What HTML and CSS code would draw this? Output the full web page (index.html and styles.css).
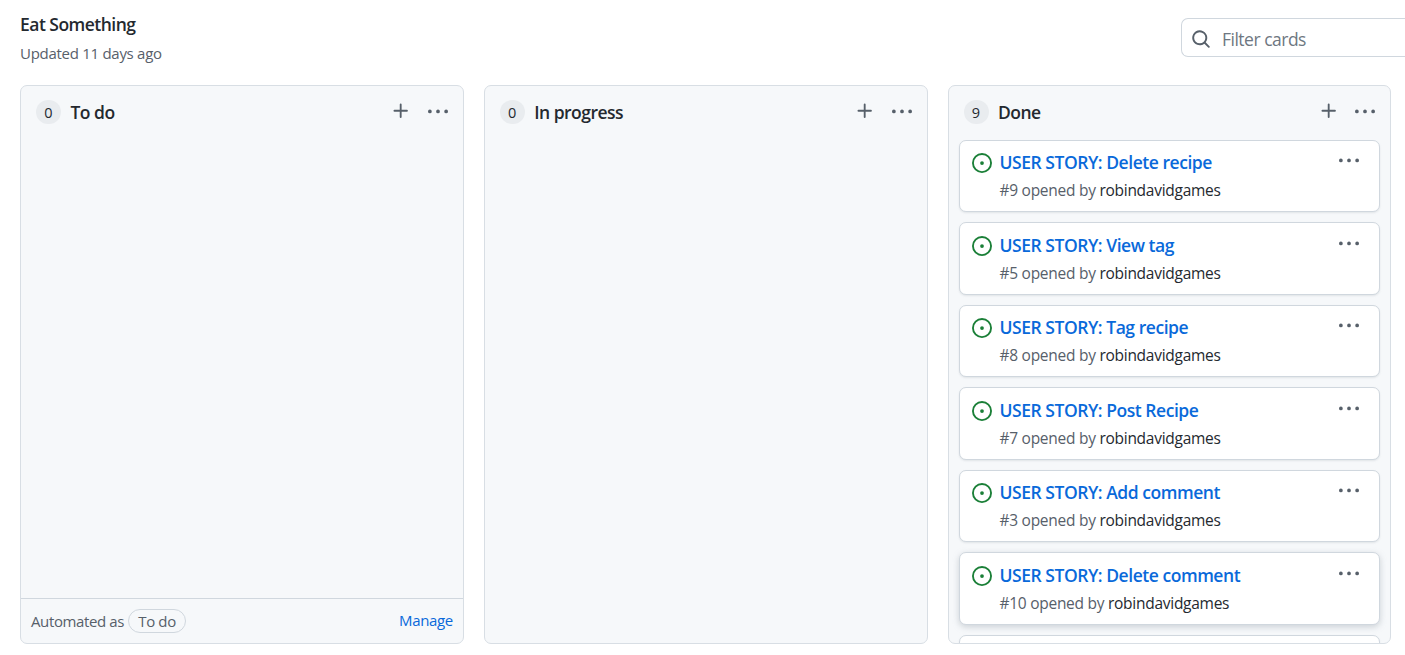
FILE: index.html
```html
<!DOCTYPE html>
<html lang="en">
<head>
<meta charset="utf-8">
<title>Eat Something</title>
<link rel="stylesheet" href="styles.css">
</head>
<body>
<svg class="defs" aria-hidden="true">
  <symbol id="plus" viewBox="0 0 16 16"><path d="M7.75 2a.75.75 0 01.75.75V7h4.25a.75.75 0 110 1.5H8.5v4.25a.75.75 0 11-1.5 0V8.5H2.75a.75.75 0 010-1.5H7V2.75A.75.75 0 017.75 2z"/></symbol>
  <symbol id="dots" viewBox="0 0 16 16"><path d="M8 9a1.5 1.5 0 100-3 1.5 1.5 0 000 3zM1.5 9a1.5 1.5 0 100-3 1.5 1.5 0 000 3zm13 0a1.5 1.5 0 100-3 1.5 1.5 0 000 3z"/></symbol>
  <symbol id="issue" viewBox="0 0 16 16"><path d="M8 9.5a1.5 1.5 0 100-3 1.5 1.5 0 000 3z"/><path fill-rule="evenodd" d="M8 0a8 8 0 100 16A8 8 0 008 0zM1.5 8a6.5 6.5 0 1113 0 6.5 6.5 0 01-13 0z"/></symbol>
  <symbol id="search" viewBox="0 0 16 16"><path fill-rule="evenodd" d="M11.5 7a4.499 4.499 0 11-8.998 0A4.499 4.499 0 0111.5 7zm-.82 4.74a6 6 0 111.06-1.06l3.04 3.04a.75.75 0 11-1.06 1.06l-3.04-3.04z"/></symbol>
</svg>
<header class="header">
  <div>
    <h1 class="project">Eat Something</h1>
    <p class="updated">Updated 11 days ago</p>
  </div>
  <div class="filter"><svg class="icon search"><use href="#search"/></svg><span class="placeholder">Filter cards</span></div>
</header>
<main class="board">
  <section class="column">
    <div class="column-head"><span class="count">0</span><h2 class="column-title">To do</h2><svg class="icon plus"><use href="#plus"/></svg><svg class="icon dots"><use href="#dots"/></svg></div>
    <div class="cards"></div>
    <footer class="automation"><span>Automated as</span><span class="pill">To do</span><a class="manage">Manage</a></footer>
  </section>
  <section class="column">
    <div class="column-head"><span class="count">0</span><h2 class="column-title">In progress</h2><svg class="icon plus"><use href="#plus"/></svg><svg class="icon dots"><use href="#dots"/></svg></div>
    <div class="cards"></div>
  </section>
  <section class="column">
    <div class="column-head"><span class="count">9</span><h2 class="column-title">Done</h2><svg class="icon plus"><use href="#plus"/></svg><svg class="icon dots"><use href="#dots"/></svg></div>
    <div class="cards">
      <article class="card"><svg class="icon issue"><use href="#issue"/></svg><div class="card-body"><a class="card-title">USER STORY: Delete recipe</a><p class="meta">#9 opened by <span class="author">robindavidgames</span></p></div><svg class="icon dots"><use href="#dots"/></svg></article>
      <article class="card"><svg class="icon issue"><use href="#issue"/></svg><div class="card-body"><a class="card-title">USER STORY: View tag</a><p class="meta">#5 opened by <span class="author">robindavidgames</span></p></div><svg class="icon dots"><use href="#dots"/></svg></article>
      <article class="card"><svg class="icon issue"><use href="#issue"/></svg><div class="card-body"><a class="card-title">USER STORY: Tag recipe</a><p class="meta">#8 opened by <span class="author">robindavidgames</span></p></div><svg class="icon dots"><use href="#dots"/></svg></article>
      <article class="card"><svg class="icon issue"><use href="#issue"/></svg><div class="card-body"><a class="card-title">USER STORY: Post Recipe</a><p class="meta">#7 opened by <span class="author">robindavidgames</span></p></div><svg class="icon dots"><use href="#dots"/></svg></article>
      <article class="card"><svg class="icon issue"><use href="#issue"/></svg><div class="card-body"><a class="card-title">USER STORY: Add comment</a><p class="meta">#3 opened by <span class="author">robindavidgames</span></p></div><svg class="icon dots"><use href="#dots"/></svg></article>
      <article class="card raised"><svg class="icon issue"><use href="#issue"/></svg><div class="card-body"><a class="card-title">USER STORY: Delete comment</a><p class="meta">#10 opened by <span class="author">robindavidgames</span></p></div><svg class="icon dots"><use href="#dots"/></svg></article>
      <article class="card"></article>
    </div>
  </section>
</main>
</body>
</html>
```

FILE: styles.css
```css
* { box-sizing: border-box; }
html, body { height: 100%; }
body {
  margin: 0;
  overflow: hidden;
  display: flex;
  flex-direction: column;
  background: #fff;
  color: #24292f;
  font-family: "Segoe UI", "Open Sans", "Noto Sans", sans-serif;
  white-space: nowrap;
}
h1, h2, p { margin: 0; }
.defs { display: none; }
.icon { width: 20px; height: 20px; flex: none; fill: #57606a; overflow: visible; }

.header { height: 85px; flex: none; padding-left: 20px; display: flex; justify-content: space-between; }
.project { margin-top: 10px; font-size: 17.5px; line-height: 28px; font-weight: 600; letter-spacing: -0.52px; }
.updated { margin-top: 3px; font-size: 15px; line-height: 24px; color: #57606a; letter-spacing: -0.28px; }
.filter {
  width: 224px; height: 39px; margin-top: 18px; padding-left: 9px;
  display: flex; align-items: center; gap: 11px;
  border: 1px solid #d0d7de; border-right: 0; border-radius: 7px 0 0 7px;
  color: #6e7781; font-size: 17.5px; letter-spacing: -0.5px;
}
.search { margin-top: 2px; }
.placeholder { padding-top: 2px; }

.board { flex: none; height: 559px; padding: 0 13.75px 0 20px; display: flex; gap: 20px; }
.column {
  flex: 1; min-width: 0; display: flex; flex-direction: column; overflow: hidden;
  background: #f6f8fa; border: 1px solid #d8dee4; border-radius: 7px;
}
.column-head { flex: none; height: 53.7px; padding: 0 15px; display: flex; align-items: flex-start; }
.count {
  width: 25px; height: 24px; margin-top: 14px; border-radius: 12px; background: #e9ecef;
  font-size: 14.5px; line-height: 25px; text-align: center;
}
.column-title { flex: 1; margin: 12px 0 0 9.5px; font-size: 17.5px; line-height: 28px; font-weight: 600; letter-spacing: -0.52px; }
.column-head .plus { margin: 15px 16.3px 0 0; }
.column-head .dots { margin-top: 16px; }
.cards { flex: 1; min-height: 0; overflow: hidden; padding: 0 10px; }

.card {
  height: 72.5px; margin-bottom: 10px; padding: 0 20px 0 12px; display: flex; align-items: flex-start;
  background: #fff; border: 1px solid #d0d7de; border-radius: 7px; box-shadow: 0 1px 2px rgba(140, 149, 159, .2);
}
.raised { box-shadow: 0 2px 6px rgba(140, 149, 159, .4); }
.issue { margin-top: 12.6px; fill: #1a7f37; }
.card-body { flex: 1; margin-left: 8px; padding-top: 7.6px; }
.card-title { display: block; color: #0969da; font-size: 17.5px; line-height: 28px; font-weight: 600; letter-spacing: -0.46px; }
.meta { margin-top: .8px; color: #57606a; font-size: 15.5px; line-height: 27px; letter-spacing: -0.27px; }
.author { color: #24292f; }
.card .dots { margin-top: 10.6px; }

.automation { height: 45px; flex: none; border-top: 1px solid #d0d7de; padding: 0 10px; display: flex; align-items: center; color: #57606a; font-size: 15px; letter-spacing: -0.38px; }
.pill { height: 24px; width: 58px; margin-left: 4px; border: 1px solid #d0d7de; border-radius: 12px; line-height: 23px; text-align: center; }
.manage { margin-left: auto; padding-bottom: 2px; color: #0969da; }
```
